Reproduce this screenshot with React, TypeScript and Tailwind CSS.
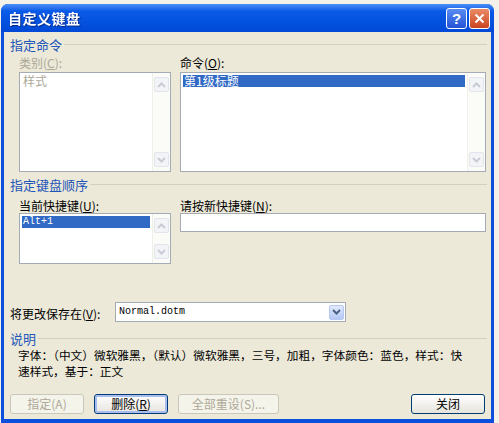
import React from "react";

const Arrow = ({ dir, active }: { dir: "up" | "down"; active?: boolean }) => (
  <div
    className={`w-[15px] h-[15px] rounded-[2px] border flex items-center justify-center ${
      active
        ? "border-[#b6c8f2] bg-gradient-to-b from-[#e2eafd] to-[#b4c8f5]"
        : "border-[#e2e5ec] bg-[#f3f4f7]"
    }`}
  >
    <svg width="9" height="6" viewBox="0 0 9 6">
      <path
        d={dir === "up" ? "M1 5 L4.5 1.5 L8 5" : "M1 1 L4.5 4.5 L8 1"}
        stroke={active ? "#4d6185" : "#c7cbd5"}
        strokeWidth="2"
        fill="none"
      />
    </svg>
  </div>
);

const GroupHeader = ({ text }: { text: string }) => (
  <div className="flex items-center h-[13px] gap-[2px]">
    <span className="text-[#1f56b8] text-[13px] leading-[13px] whitespace-nowrap">{text}</span>
    <div className="flex-1 h-px bg-[#d3d0bf] mr-[2px]" />
  </div>
);

const Mn = ({ c }: { c: string }) => <span className="underline">{c}</span>;

const ListBox = ({
  h,
  item,
  mono,
  disabled,
}: {
  h: string;
  item: string;
  mono?: boolean;
  disabled?: boolean;
}) => (
  <div className={`flex border border-[#a4abb4] bg-white ${h}`}>
    <div className="flex-1 p-[2px]">
      <div
        className={`h-[12px] leading-[12px] px-[1px] ${
          disabled ? "text-[#aca899]" : "bg-[#316ac5] text-white"
        } ${mono ? "font-['Liberation_Mono',monospace] text-[10px]" : "text-[12px]"}`}
      >
        {item}
      </div>
    </div>
    <div className="w-[18px] flex flex-col justify-between items-center py-[4px] bg-[#fbfbf8] border-l border-[#f0f0ea]">
      <Arrow dir="up" />
      <Arrow dir="down" />
    </div>
  </div>
);

const Btn = ({
  children,
  w,
  disabled,
  def,
}: {
  children: React.ReactNode;
  w: string;
  disabled?: boolean;
  def?: boolean;
}) => (
  <div
    className={`h-[20px] rounded-[3px] border flex items-center justify-center text-[12px] ${w} ${
      disabled
        ? "border-[#cac8bb] bg-[#f5f4ea] text-[#aca899]"
        : "border-[#003c74] bg-gradient-to-b from-white to-[#e6e4dc] text-black"
    } ${def ? "shadow-[inset_0_0_0_2px_#a9bdf0]" : ""}`}
  >
    {children}
  </div>
);

export default function App() {
  return (
    <div className="w-[499px] h-[423px] bg-[#f3f1ea] pt-[4px] pl-[1px] overflow-hidden font-['Noto_Sans_CJK_SC','Liberation_Sans',sans-serif] text-black">
      <div className="w-[493px] h-[419px] rounded-t-[7px] bg-[#0b4fdc] flex flex-col">
        {/* title bar */}
        <div className="h-[28px] rounded-t-[7px] bg-gradient-to-b from-[#4a90f6] via-[#0a5ae8] via-25% to-[#0049d6] flex items-center pl-[7px] pr-[4px]">
          <span className="text-white font-bold text-[14px] leading-[14px] tracking-[0.5px] flex-1 drop-shadow-[1px_1px_0_#0a2c8a]">
            自定义键盘
          </span>
          <div className="flex gap-[2px]">
            <div className="w-[21px] h-[21px] rounded-[3px] border border-white bg-gradient-to-b from-[#5b8cf3] to-[#2452d6] flex items-center justify-center text-white font-bold text-[15px] leading-none font-['Liberation_Sans',sans-serif]">
              ?
            </div>
            <div className="w-[21px] h-[21px] rounded-[3px] border border-white bg-gradient-to-b from-[#ec8a66] to-[#c9431c] flex items-center justify-center">
              <svg width="11" height="11" viewBox="0 0 11 11">
                <path d="M1.5 1.5 L9.5 9.5 M9.5 1.5 L1.5 9.5" stroke="white" strokeWidth="2" />
              </svg>
            </div>
          </div>
        </div>

        {/* body */}
        <div className="mx-[3px] h-[387px] bg-[#ece9d8] pl-[6px] pr-[2px] overflow-hidden">
          <div className="mt-[6px]">
            <GroupHeader text="指定命令" />
          </div>
          <div className="flex mt-[5px] pl-[9px] gap-[9px]">
            <div className="w-[152px] flex flex-col">
              <div className="h-[13px] text-[12px] leading-[13px] text-[#aca899]">
                类别(<Mn c="C" />):
              </div>
              <div className="mt-[3px]">
                <ListBox h="h-[100px]" item="样式" disabled />
              </div>
            </div>
            <div className="w-[306px] flex flex-col">
              <div className="h-[13px] text-[12px] leading-[13px]">
                命令(<Mn c="O" />):
              </div>
              <div className="mt-[3px]">
                <ListBox h="h-[100px]" item="第1级标题" />
              </div>
            </div>
          </div>

          <div className="mt-[6px]">
            <GroupHeader text="指定键盘顺序" />
          </div>
          <div className="flex mt-[8px] pl-[9px] gap-[9px]">
            <div className="w-[152px] flex flex-col">
              <div className="h-[13px] text-[12px] leading-[13px]">
                当前快捷键(<Mn c="U" />):
              </div>
              <div className="mt-[1px]">
                <ListBox h="h-[51px]" item="Alt+1" mono />
              </div>
            </div>
            <div className="w-[306px] flex flex-col">
              <div className="h-[13px] text-[12px] leading-[13px]">
                请按新快捷键(<Mn c="N" />):
              </div>
              <div className="mt-[1px] h-[19px] border border-[#a4abb4] bg-white" />
            </div>
          </div>

          <div className="flex items-center mt-[38px] h-[20px]">
            <div className="w-[105px] text-[12px] leading-[13px] pt-[3px]">
              将更改保存在(<Mn c="V" />):
            </div>
            <div className="w-[231px] h-[20px] border border-[#a4abb4] bg-white flex items-center pl-[3px] pr-[1px]">
              <span className="flex-1 font-['Liberation_Mono',monospace] text-[10px] leading-none">
                Normal.dotm
              </span>
              <Arrow dir="down" active />
            </div>
          </div>

          <div className="mt-[10px]">
            <GroupHeader text="说明" />
          </div>
          <div className="mt-[2px] pl-[8px] text-[11.7px] leading-[16px] whitespace-nowrap">
            <div>字体：（中文）微软雅黑，（默认）微软雅黑，三号，加粗，字体颜色：蓝色，样式：快</div>
            <div>速样式，基于：正文</div>
          </div>

          <div className="flex mt-[15px]">
            <Btn w="w-[74px]" disabled>
              指定(A)
            </Btn>
            <div className="ml-[10px]">
              <Btn w="w-[74px]" def>
                删除(<Mn c="R" />)
              </Btn>
            </div>
            <div className="ml-[10px]">
              <Btn w="w-[101px]" disabled>
                全部重设(S)...
              </Btn>
            </div>
            <div className="ml-auto mr-[4px]">
              <Btn w="w-[74px]">关闭</Btn>
            </div>
          </div>
        </div>
      </div>
    </div>
  );
}
